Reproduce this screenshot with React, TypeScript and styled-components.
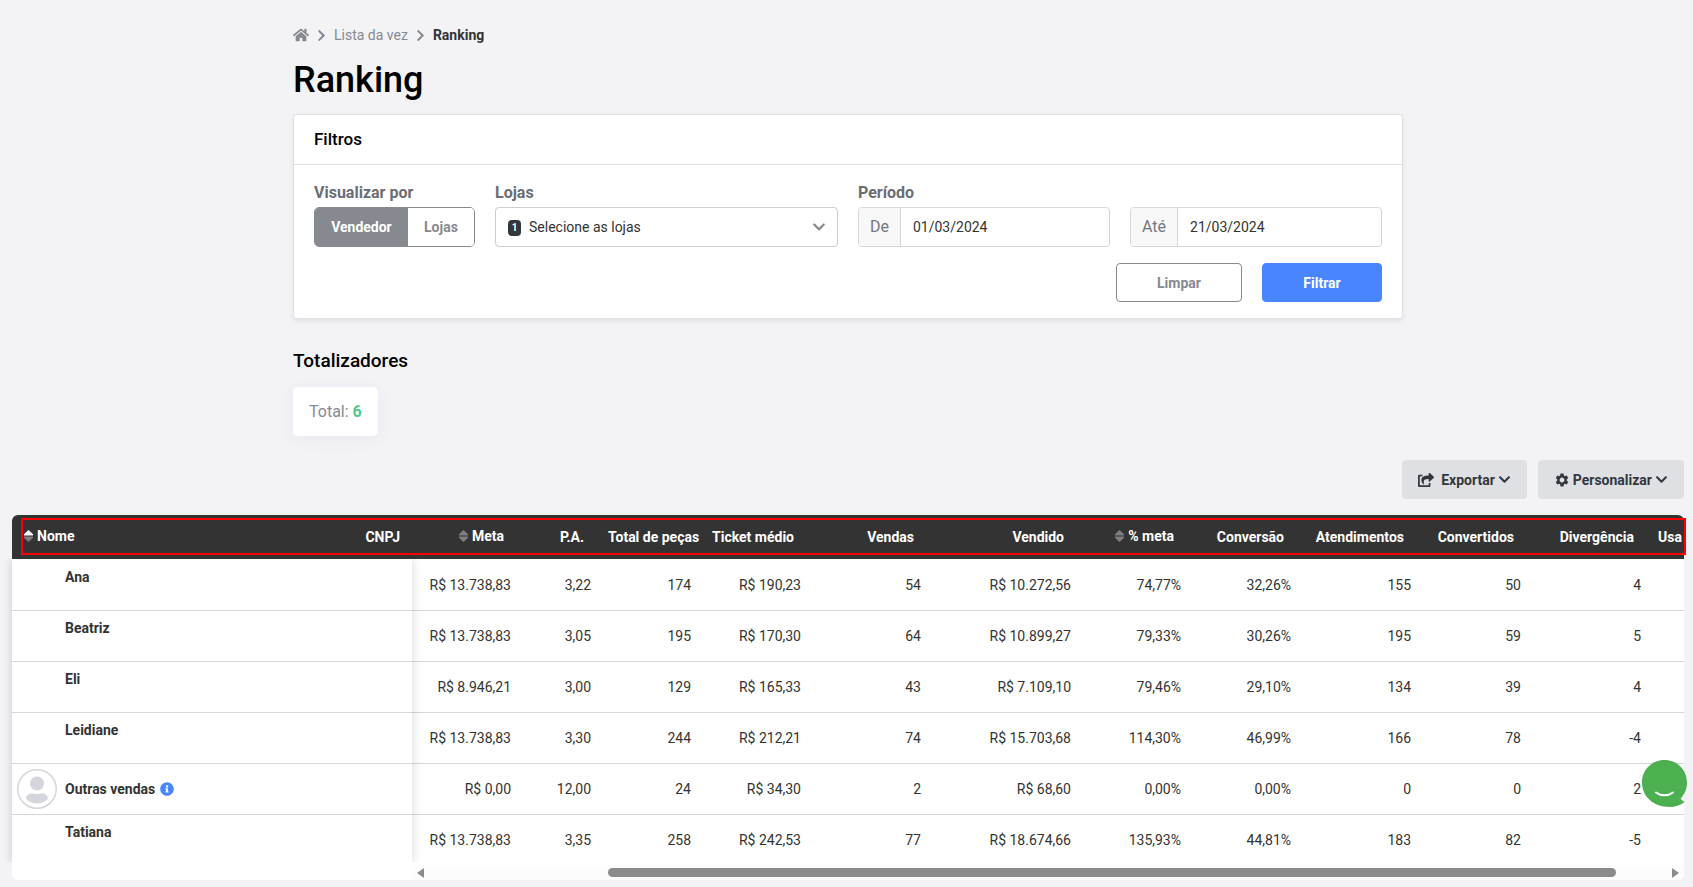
import React, { useState } from 'react';
import styled, { createGlobalStyle, css } from 'styled-components';
import { FaHome, FaChevronRight, FaChevronDown, FaShareSquare, FaInfoCircle } from 'react-icons/fa';
import { MdSettings } from 'react-icons/md';

const GlobalStyle = createGlobalStyle`
  *, *::before, *::after { box-sizing: border-box; }
  body {
    margin: 0;
    background: #f3f3f6;
    color: #333;
    font: 14px/20px Roboto, "Liberation Sans", sans-serif;
    overflow-x: hidden;
  }
  button, input, select { font: inherit; color: inherit; margin: 0; }
`;

const Page = styled.div`
  padding: 24px 9px 6px 12px;
`;

const Container = styled.main`
  max-width: 1110px;
  margin: 0 auto;
`;

const Breadcrumb = styled.nav`
  display: flex;
  align-items: center;
  gap: 6px;
  height: 22px;
  color: #868990;
`;

const CrumbLink = styled.a`
  display: flex;
  color: #868990;
  text-decoration: none;
`;

const CurrentCrumb = styled.span`
  color: #333;
  font-weight: 700;
`;

const PageTitle = styled.h1`
  margin: 13px 0;
  color: #000;
  font-size: 36px;
  line-height: 42px;
  font-weight: 500;
`;

const Card = styled.section`
  background: #fff;
  border: 1px solid #dfe0e4;
  border-radius: 4px;
  box-shadow: 0 2px 5px rgba(40, 40, 60, 0.09);
`;

const CardHeader = styled.h2`
  margin: 0;
  padding: 12px 20px 13px;
  border-bottom: 1px solid #dfe0e4;
  color: #000;
  font-size: 17px;
  line-height: 24px;
  font-weight: 500;
`;

const CardBody = styled.form`
  padding: 17px 20px 16px;
`;

const Fields = styled.div`
  display: grid;
  grid-template-columns: 161px minmax(0, 343fr) minmax(0, 524fr);
  column-gap: 20px;
`;

const Field = styled.div`
  display: flex;
  flex-direction: column;
`;

const labelText = css`
  padding: 0;
  margin-bottom: 3px;
  color: #6b6d74;
  font-size: 16px;
  line-height: 22px;
  font-weight: 700;
`;

const Label = styled.label`
  ${labelText}
`;

const GroupLabel = styled.span`
  ${labelText}
`;

const Toggle = styled.div`
  display: flex;
  height: 40px;
  border: 1px solid #868990;
  border-radius: 5px;
  overflow: hidden;
`;

const ToggleOption = styled.button<{ $active: boolean }>`
  flex: 1 1 auto;
  padding: 0 16px;
  border: 0;
  background: ${(p) => (p.$active ? '#868990' : '#fff')};
  color: ${(p) => (p.$active ? '#fff' : '#868990')};
  font-weight: 700;
  cursor: pointer;
`;

const SelectBox = styled.div`
  position: relative;
  display: grid;
`;

const StoreSelect = styled.select`
  appearance: none;
  width: 100%;
  height: 40px;
  padding: 0 36px 0 33px;
  border: 1px solid #cdced3;
  border-radius: 4px;
  background: #fff;
`;

const CountBadge = styled.span`
  position: absolute;
  left: 13px;
  top: 13px;
  width: 13px;
  height: 16px;
  border-radius: 4px;
  background: #32373c;
  color: #fff;
  font-size: 10px;
  line-height: 16px;
  font-weight: 700;
  text-align: center;
  pointer-events: none;
`;

const SelectArrow = styled.span`
  position: absolute;
  right: 12px;
  top: 13px;
  display: flex;
  color: #868990;
  pointer-events: none;
`;

const DateRow = styled.div`
  display: grid;
  grid-template-columns: 1fr 1fr;
  gap: 20px;
`;

const DateGroup = styled.div`
  display: flex;
  height: 40px;
  border: 1px solid #d5d6dc;
  border-radius: 4px;
  background: #fff;
  overflow: hidden;
`;

const DatePrefix = styled.span`
  padding: 8px 11px;
  border-right: 1px solid #d5d6dc;
  background: #f8f8f8;
  color: #75777e;
  font-size: 16px;
  line-height: 22px;
`;

const DateInput = styled.input`
  flex: 1;
  min-width: 0;
  padding: 0 12px;
  border: 0;
  background: transparent;
`;

const Actions = styled.div`
  display: flex;
  justify-content: flex-end;
  gap: 20px;
  margin-top: 16px;
`;

const ActionButton = styled.button<{ $primary?: boolean }>`
  height: 39px;
  width: ${(p) => (p.$primary ? 120 : 126)}px;
  border: 1px solid ${(p) => (p.$primary ? '#4885ff' : '#868990')};
  border-radius: 4px;
  background: ${(p) => (p.$primary ? '#4885ff' : '#fff')};
  color: ${(p) => (p.$primary ? '#fff' : '#868990')};
  font-weight: 700;
  cursor: pointer;
`;

const SectionTitle = styled.h2`
  margin: 30px 0 14px;
  color: #000;
  font-size: 19px;
  line-height: 24px;
  font-weight: 500;
`;

const TotalCard = styled.div`
  width: fit-content;
  padding: 14px 16px 13px;
  border-radius: 5px;
  background: #fff;
  box-shadow: 0 4px 16px rgba(80, 80, 160, 0.07);
  color: #868990;
  font-size: 16px;
  line-height: 22px;

  strong { color: #4fc88a; }
`;

const Toolbar = styled.div`
  display: flex;
  justify-content: flex-end;
  gap: 11px;
  margin: 24px 0 16px;
`;

const ToolButton = styled.button`
  display: flex;
  align-items: center;
  gap: 3px;
  height: 39px;
  padding: 0 16px;
  border: 0;
  border-radius: 4px;
  background: #dfe0e4;
  color: #32373c;
  font-weight: 700;
  cursor: pointer;
`;

const ToolLabel = styled.span<{ $spaced?: boolean }>`
  margin-left: ${(p) => (p.$spaced ? 4 : 0)}px;
`;

const TablePanel = styled.section`
  position: relative;
`;

const TableClip = styled.div`
  border-radius: 6px;
  background: #fff;
  overflow: hidden;
`;

const Table = styled.table`
  width: 100%;
  min-width: 1788px;
  table-layout: fixed;
  border-collapse: separate;
  border-spacing: 0;
`;

const HeadCell = styled.th<{ $left?: boolean }>`
  height: 44px;
  padding: 0 16px 1px 8px;
  background: #333;
  color: #fff;
  font-weight: 700;
  text-align: ${(p) => (p.$left ? 'left' : 'right')};
  white-space: nowrap;

  &:first-child { padding-left: 12px; }
  &:nth-child(2) { padding-right: 12px; }
`;

const SortButton = styled.button`
  display: inline-flex;
  align-items: center;
  gap: 4px;
  padding: 0;
  border: 0;
  background: none;
  color: inherit;
  font-weight: inherit;
  cursor: pointer;
`;

const Row = styled.tr`
  &:first-child > * { border-top-color: transparent; }
`;

const Cell = styled.td`
  height: 51px;
  padding: 0 9px 1px 8px;
  border-top: 1px solid #d5d6dc;
  text-align: right;
  white-space: nowrap;
`;

const NameCell = styled.th<{ $middle?: boolean }>`
  height: 51px;
  padding: ${(p) => (p.$middle ? '0 5px' : '7px 5px 0 53px')};
  border-top: 1px solid #d5d6dc;
  font-weight: 700;
  text-align: left;
  vertical-align: ${(p) => (p.$middle ? 'middle' : 'top')};
`;

const Person = styled.div`
  display: flex;
  align-items: center;
  gap: 8px;

  svg { flex: none; }
`;

const PersonName = styled.span`
  display: flex;
  align-items: center;
  gap: 5px;
`;

const PinnedShadow = styled.div`
  position: absolute;
  top: 44px;
  bottom: 17px;
  left: 0;
  width: 400px;
  box-shadow: 0 0 10px rgba(0, 0, 0, 0.17);
  clip-path: inset(0 -12px);
  pointer-events: none;
`;

const Highlight = styled.div`
  position: absolute;
  top: 3px;
  left: 9px;
  right: -2px;
  height: 37px;
  border: 2px solid #f00;
  pointer-events: none;
`;

const ScrollTrack = styled.div`
  display: flex;
  align-items: center;
  height: 15px;
  margin-left: 400px;
  padding: 0 5px;
  background: #fcfcfc;
  color: #8b8b8b;
`;

const ScrollRail = styled.div`
  flex: 1;
  display: grid;
  grid-template-columns: 184fr 1008fr 56fr;
`;

const ScrollThumb = styled.div`
  grid-column: 2;
  height: 9px;
  border-radius: 5px;
  background: #8b8b8b;
`;

const ChatButton = styled.button`
  position: fixed;
  right: 6px;
  bottom: 80px;
  width: 45px;
  height: 47px;
  padding: 0;
  border: 0;
  background: none;
  cursor: pointer;

  svg { display: block; }
`;

const SortIcon = ({ up }: { up?: boolean }) => (
  <svg width="9" height="12" viewBox="0 0 9 12" aria-hidden="true">
    <path d="M4.500 0 L9 4.300 V5.400 H0 V4.300 Z" fill={up ? '#fff' : '#7f7f7f'} />
    <path d="M4.500 12 L9 7.700 V6.600 H0 V7.700 Z" fill="#7f7f7f" />
  </svg>
);

const Avatar = () => (
  <svg width="40" height="40" viewBox="0 0 40 40" aria-hidden="true">
    <circle cx="20" cy="20" r="19.25" fill="#fff" stroke="#d5d6dc" strokeWidth="1.5" />
    <circle cx="20" cy="14.5" r="7" fill="#d5d6dc" />
    <path d="M9 29.500 C9 26.500 12 24.500 15 24.500 C17 24.500 18 25 20 25 C22 25 23 24.500 25 24.500 C28 24.500 31 26.500 31 29.500 C28.500 32.800 24.500 34.500 20 34.500 C15.500 34.500 11.500 32.800 9 29.500 Z" fill="#d5d6dc" />
  </svg>
);

const ScrollArrow = ({ back }: { back?: boolean }) => (
  <svg width="7" height="10" viewBox="0 0 7 10" aria-hidden="true">
    <path d={back ? 'M7 0 V10 L0 5 Z' : 'M0 0 V10 L7 5 Z'} fill="currentColor" />
  </svg>
);

const ChatIcon = () => (
  <svg width="45" height="47" viewBox="0 0 45 47" aria-hidden="true">
    <path d="M22.500 0 C35 0 45 9.500 45 22.500 C45 29 42.500 34.500 38.500 38.800 C39.800 40.200 41.200 41.200 42.800 42 C38 45.500 33 47 27.500 47 C11 47 0 36 0 22.500 C0 9.500 10 0 22.500 0 Z" fill="#4caf50" />
    <path d="M14 32.500 C19 36.300 26 36.300 31 32.500" fill="none" stroke="#fff" strokeWidth="2" strokeLinecap="round" />
  </svg>
);

type Column = { title: string; width?: number; sortable?: boolean };

const columns: Column[] = [
  { title: 'Meta', width: 108, sortable: true },
  { title: 'P.A.', width: 80 },
  { title: 'Total de peças', width: 100 },
  { title: 'Ticket médio', width: 110 },
  { title: 'Vendas', width: 120 },
  { title: 'Vendido', width: 150 },
  { title: '% meta', width: 110, sortable: true },
  { title: 'Conversão', width: 110 },
  { title: 'Atendimentos', width: 120 },
  { title: 'Convertidos', width: 110 },
  { title: 'Divergência', width: 120 },
];

const people = [
  { name: 'Ana', values: ['R$ 13.738,83', '3,22', '174', 'R$ 190,23', '54', 'R$ 10.272,56', '74,77%', '32,26%', '155', '50', '4'] },
  { name: 'Beatriz', values: ['R$ 13.738,83', '3,05', '195', 'R$ 170,30', '64', 'R$ 10.899,27', '79,33%', '30,26%', '195', '59', '5'] },
  { name: 'Eli', values: ['R$ 8.946,21', '3,00', '129', 'R$ 165,33', '43', 'R$ 7.109,10', '79,46%', '29,10%', '134', '39', '4'] },
  { name: 'Leidiane', values: ['R$ 13.738,83', '3,30', '244', 'R$ 212,21', '74', 'R$ 15.703,68', '114,30%', '46,99%', '166', '78', '-4'] },
  { name: 'Outras vendas', generic: true, values: ['R$ 0,00', '12,00', '24', 'R$ 34,30', '2', 'R$ 68,60', '0,00%', '0,00%', '0', '0', '2'] },
  { name: 'Tatiana', values: ['R$ 13.738,83', '3,35', '258', 'R$ 242,53', '77', 'R$ 18.674,66', '135,93%', '44,81%', '183', '82', '-5'] },
];

export default function App() {
  const [view, setView] = useState('Vendedor');

  return (
    <>
      <GlobalStyle />
      <Page>
        <Container>
          <Breadcrumb aria-label="Navegação">
            <CrumbLink href="#" aria-label="Início"><FaHome size={16} /></CrumbLink>
            <FaChevronRight size={13} />
            <CrumbLink href="#">Lista da vez</CrumbLink>
            <FaChevronRight size={13} />
            <CurrentCrumb aria-current="page">Ranking</CurrentCrumb>
          </Breadcrumb>
          <PageTitle>Ranking</PageTitle>

          <Card>
            <CardHeader>Filtros</CardHeader>
            <CardBody onSubmit={(e) => e.preventDefault()}>
              <Fields>
                <Field>
                  <GroupLabel id="view-label">Visualizar por</GroupLabel>
                  <Toggle role="group" aria-labelledby="view-label">
                    {['Vendedor', 'Lojas'].map((option) => (
                      <ToggleOption
                        key={option}
                        type="button"
                        $active={view === option}
                        aria-pressed={view === option}
                        onClick={() => setView(option)}
                      >
                        {option}
                      </ToggleOption>
                    ))}
                  </Toggle>
                </Field>
                <Field>
                  <Label htmlFor="stores">Lojas</Label>
                  <SelectBox>
                    <StoreSelect id="stores">
                      <option>Selecione as lojas</option>
                    </StoreSelect>
                    <CountBadge>1</CountBadge>
                    <SelectArrow><FaChevronDown size={14} /></SelectArrow>
                  </SelectBox>
                </Field>
                <Field>
                  <Label htmlFor="from">Período</Label>
                  <DateRow>
                    <DateGroup>
                      <DatePrefix>De</DatePrefix>
                      <DateInput id="from" defaultValue="01/03/2024" />
                    </DateGroup>
                    <DateGroup>
                      <DatePrefix>Até</DatePrefix>
                      <DateInput aria-label="Até" defaultValue="21/03/2024" />
                    </DateGroup>
                  </DateRow>
                </Field>
              </Fields>
              <Actions>
                <ActionButton type="reset">Limpar</ActionButton>
                <ActionButton type="submit" $primary>Filtrar</ActionButton>
              </Actions>
            </CardBody>
          </Card>

          <SectionTitle>Totalizadores</SectionTitle>
          <TotalCard>Total: <strong>6</strong></TotalCard>
        </Container>

        <Toolbar>
          <ToolButton type="button">
            <FaShareSquare size={16} />
            <ToolLabel $spaced>Exportar</ToolLabel>
            <FaChevronDown size={13} />
          </ToolButton>
          <ToolButton type="button">
            <MdSettings size={16} />
            <ToolLabel>Personalizar</ToolLabel>
            <FaChevronDown size={13} />
          </ToolButton>
        </Toolbar>

        <TablePanel>
          <TableClip>
            <Table>
              <colgroup>
                <col width={300} />
                <col width={100} />
                {columns.map((c) => <col key={c.title} width={c.width} />)}
                <col />
              </colgroup>
              <thead>
                <tr>
                  <HeadCell scope="col" $left>
                    <SortButton type="button"><SortIcon up />Nome</SortButton>
                  </HeadCell>
                  <HeadCell scope="col">CNPJ</HeadCell>
                  {columns.map((c) => (
                    <HeadCell key={c.title} scope="col">
                      {c.sortable ? <SortButton type="button"><SortIcon />{c.title}</SortButton> : c.title}
                    </HeadCell>
                  ))}
                  <HeadCell scope="col" $left>Usa</HeadCell>
                </tr>
              </thead>
              <tbody>
                {people.map((p) => (
                  <Row key={p.name}>
                    <NameCell scope="row" $middle={p.generic}>
                      {p.generic ? (
                        <Person>
                          <Avatar />
                          <PersonName>{p.name}<FaInfoCircle size={14} color="#4885ff" /></PersonName>
                        </Person>
                      ) : p.name}
                    </NameCell>
                    <Cell />
                    {p.values.map((v, i) => <Cell key={columns[i].title}>{v}</Cell>)}
                    <Cell />
                  </Row>
                ))}
              </tbody>
            </Table>
            <ScrollTrack>
              <ScrollArrow back />
              <ScrollRail><ScrollThumb /></ScrollRail>
              <ScrollArrow />
            </ScrollTrack>
          </TableClip>
          <PinnedShadow />
          <Highlight />
        </TablePanel>
      </Page>
      <ChatButton type="button" aria-label="Abrir chat"><ChatIcon /></ChatButton>
    </>
  );
}
